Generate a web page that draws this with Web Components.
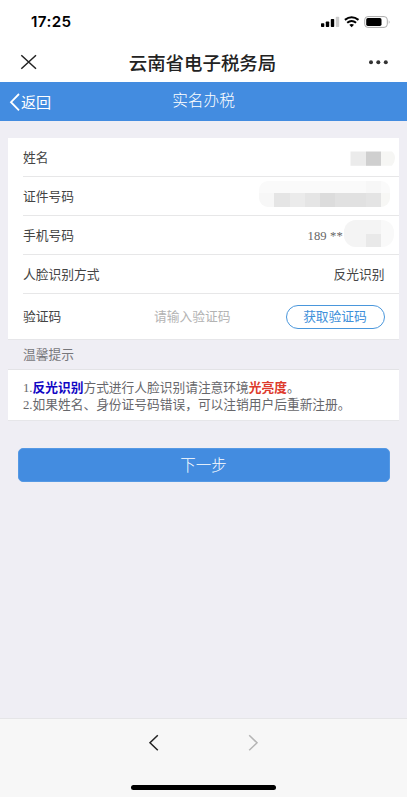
<!DOCTYPE html>
<html lang="zh-CN">
<head>
<meta charset="utf-8">
<title>云南省电子税务局</title>
<style>
html,body{margin:0;height:100%}
body{font-family:"Liberation Sans","Noto Sans CJK SC",sans-serif;background:#efeef4;color:#444;overflow:hidden}
</style>
</head>
<body>
<tax-app></tax-app>
<script>
const define = (name, html) => customElements.define(name, class extends HTMLElement {
  constructor() {
    super();
    const t = document.createElement('template');
    t.innerHTML = html;
    this.attachShadow({mode: 'open'}).append(t.content.cloneNode(true));
  }
});

define('status-bar', `
<style>
:host{display:flex;justify-content:space-between;align-items:center;height:42px;padding:2px 17px 0 31px;box-sizing:border-box;background:#fff}
.time{font:600 15.2px/20px Inter,sans-serif;color:#000;letter-spacing:.4px}
svg{display:block}
</style>
<span class="time">17:25</span>
<svg width="72" height="16" viewBox="318 14 72 16">
  <rect x="321" y="23.2" width="3.3" height="3.8" rx=".7"/><rect x="325.8" y="21.5" width="3.4" height="5.5" rx=".7"/>
  <rect x="330.8" y="19" width="3.4" height="8" rx=".7"/><rect x="335.8" y="16.8" width="3.4" height="10.2" rx=".7" fill="#ccc"/>
  <g fill="none" stroke="#000" stroke-width="2"><path d="M344.9 19.9Q351.6 14.6 358.5 19.9M347.2 22.7Q351.6 19.2 356.1 22.7"/></g>
  <path d="M349.3 24.7Q351.6 23.1 354 24.7L351.6 27.2Z"/>
  <rect x="364.7" y="16.6" width="22.6" height="10.8" rx="3.2" fill="#fff" stroke="#aaa" stroke-width="1"/>
  <rect x="366.2" y="18.1" width="15.3" height="7.8" rx="1.6"/><path d="M388.8 20.2Q390.2 22 388.8 23.8Z" fill="#999"/>
</svg>`);

define('title-bar', `
<style>
:host{display:grid;grid-template-columns:60px 1fr 60px;align-items:center;height:40px;background:#fff;color:#222}
h1{margin:0;font:500 18.45px/26px "Noto Sans CJK SC",sans-serif;text-align:center;white-space:nowrap;padding-right:2px}
svg{display:block}
</style>
<svg width="60" height="40" fill="none" stroke="#222" stroke-width="1.5"><path d="M21.3 13.2L36 26.8M36 13.2L21.3 26.8"/></svg>
<h1><slot></slot></h1>
<svg width="60" height="40" fill="#333"><circle cx="24" cy="20.2" r="2"/><circle cx="31.3" cy="20.2" r="2"/><circle cx="38.8" cy="20.2" r="2"/></svg>`);

define('page-header', `
<style>
:host{display:grid;grid-template-columns:90px 1fr 90px;height:39px;background:#438ce0;color:#fff;font-size:15.1px;line-height:38px}
.back{display:flex;align-items:center;height:39px;padding-left:9px}
.back span{padding-top:2px}
.title{text-align:center;line-height:38px;font-size:15.7px;font-weight:300}
</style>
<div class="back"><svg width="12" height="20" fill="none" stroke="#fff" stroke-width="1.8"><path d="M10 2L2 10.2L10 18.4"/></svg><span>返回</span></div>
<div class="title"><slot></slot></div>`);

define('form-row', `
<style>
:host{display:flex;align-items:center;justify-content:space-between;height:var(--h,39px);box-sizing:border-box;margin-left:15px;padding:var(--pt,2px) var(--pr,14.5px) 0 0;border-bottom:1px solid #e7e7e8;font-size:12.75px;line-height:20px;color:#444}
:host([last]){border-bottom:0}
</style>
<span><slot name="label"></slot></span><slot></slot>`);

define('mosaic-name', `
<style>:host{display:block}svg{display:block}</style>
<svg width="46" height="28" viewBox="350 144 46 28"><rect x="350.5" y="151.5" width="15.5" height="14.3" fill="#ebebeb"/><path d="M381 151.5h11q3 2 3 6.5t-3 7.8h-11z" fill="#f6f6f4"/><rect x="366" y="151.5" width="15" height="14.3" fill="#cfcfcf"/></svg>`);

define('mosaic-id', `
<style>:host{display:block;margin-top:-6px}svg{display:block}</style>
<svg width="132" height="28" viewBox="258 180 132 28"><defs><clipPath id="c"><rect x="259" y="181" width="131" height="26" rx="9"/></clipPath></defs>
<g clip-path="url(#c)"><path fill="#fafafa" d="M259 181h131v12H259z"/><path fill="#f7f7f7" d="M259 193h15v14h-15z"/><path fill="#e5e5e5" d="M274 193h16v14h-16z"/><path fill="#ebebeb" d="M290 193h15v14h-15z"/><path fill="#e5e5e5" d="M305 193h15v14h-15z"/><path fill="#dcdcdc" d="M320 193h15v14h-15z"/><path fill="#e1e1e1" d="M335 193h31v14h-31z"/><path fill="#e4e4e4" d="M366 193h15v14h-15z"/><path fill="#f7f7f5" d="M381 193h9v14h-9z"/><path fill="#f7f7f7" d="M366 181h15v12h-15z"/></g></svg>`);

define('mosaic-phone', `
<style>:host{display:flex;align-items:center;font:12.6px/20px "Liberation Serif",serif;color:#666;white-space:pre}svg{display:block;margin-top:-4px}.t{letter-spacing:.15px}</style>
<span class="t">189 **</span><svg width="51" height="28" viewBox="343 220 51 28"><defs><clipPath id="c"><rect x="344" y="220" width="50" height="27" rx="12"/></clipPath></defs>
<g clip-path="url(#c)"><path fill="#f9f9f9" d="M344 220h50v27h-50z"/><path fill="#f4f4f4" d="M344 220h37v27h-37z"/><path fill="#e9e9e9" d="M366 234h15v13h-15z"/></g></svg>`);

define('code-field', `
<style>
:host{display:flex;align-items:center;flex:1;justify-content:flex-end;gap:55px}
.ph{color:#b3b3b3}
button{width:99px;height:24px;box-sizing:border-box;padding:0;border:1px solid #4a97dc;border-radius:12px;background:#fff;color:#4090da;font:inherit;line-height:21px}
</style>
<span class="ph">请输入验证码</span><button>获取验证码</button>`);

define('tips-panel', `
<style>
:host{display:block;margin:0 8px;font-size:12.73px}
.head{line-height:29px;padding-left:15px;border-bottom:1px solid #e3e3e6;border-top:1px solid #e6e6e9;box-sizing:border-box;color:#77777b;height:31px}
.body{height:51px;box-sizing:border-box;background:#fff;padding:10px 0 0 15px;line-height:17px;color:#67676b;border-bottom:1px solid #e6e6e9;white-space:nowrap;font-family:"Liberation Serif","Noto Sans CJK SC",serif}
.blue{color:#1006c4}.red{color:#dd3a2c}
</style>
<div class="head">温馨提示</div>
<div class="body"><div>1.<b class="blue">反光识别</b>方式进行人脸识别请注意环境<b class="red">光亮度</b>。</div><div>2.如果姓名、身份证号码错误，可以注销用户后重新注册。</div></div>`);

define('primary-button', `
<style>
:host{display:block;margin:27px 17.5px 0}
button{display:block;width:100%;height:33.5px;border:1px solid #5599e4;border-radius:5px;background:#438ce0;color:#fff;font:300 15.5px/31px "Noto Sans CJK SC",sans-serif;padding:0}
</style><button><slot></slot></button>`);

define('browser-nav', `
<style>
:host{display:flex;flex-direction:column;align-items:center;justify-content:space-between;height:79px;box-sizing:border-box;background:#f7f7f7;border-top:1px solid #e5e5e7;padding:15px 0 7px}
.bar{width:145px;height:5px;border-radius:3px;background:#000}
svg{display:block}
</style>
<svg width="407" height="18" fill="none" stroke-width="1.5"><path stroke="#222" d="M157.8 1.3L150 8.8L157.8 16.3"/><path stroke="#b5b5b5" d="M249.2 1.3L257 8.8L249.2 16.3"/></svg>
<div class="bar"></div>`);

define('tax-app', `
<style>
:host{display:flex;flex-direction:column;height:797px;background:#efeef4}
main{flex:1}
.card{margin:17px 8px 0;background:#fff}
</style>
<status-bar></status-bar>
<title-bar>云南省电子税务局</title-bar>
<page-header>实名办税</page-header>
<main>
  <div class="card">
    <form-row style="--pr:3px"><span slot="label">姓名</span><mosaic-name></mosaic-name></form-row>
    <form-row style="--pr:9px"><span slot="label">证件号码</span><mosaic-id></mosaic-id></form-row>
    <form-row style="--pr:5px"><span slot="label">手机号码</span><mosaic-phone></mosaic-phone></form-row>
    <form-row><span slot="label">人脸识别方式</span><span>反光识别</span></form-row>
    <form-row last style="--h:45px;--pt:0px"><span slot="label">验证码</span><code-field></code-field></form-row>
  </div>
  <tips-panel></tips-panel>
  <primary-button>下一步</primary-button>
</main>
<browser-nav></browser-nav>`);
</script>
</body>
</html>
